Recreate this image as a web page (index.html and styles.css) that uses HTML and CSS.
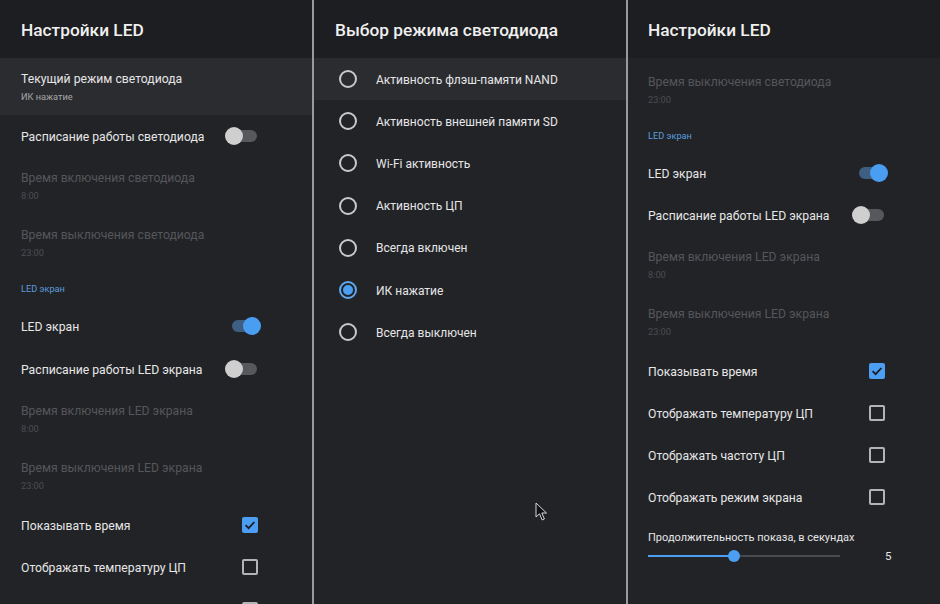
FILE: index.html
```html
<!DOCTYPE html>
<html lang="ru">
<head>
<meta charset="utf-8">
<title>Настройки LED</title>
<link rel="stylesheet" href="styles.css">
</head>
<body>
<div class="screen">
  <section class="panel">
    <header class="head">Настройки LED</header>
    <div class="list loose">
      <div class="row two hl"><div class="txt"><div class="t">Текущий режим светодиода</div><div class="s">ИК нажатие</div></div></div>
      <div class="row one"><div class="txt"><div class="t">Расписание работы светодиода</div></div><span class="sw off"><i class="track"></i><i class="thumb"></i></span></div>
      <div class="row two dis"><div class="txt"><div class="t">Время включения светодиода</div><div class="s">8:00</div></div></div>
      <div class="row two dis"><div class="txt"><div class="t">Время выключения светодиода</div><div class="s">23:00</div></div></div>
      <div class="row cat">LED экран</div>
      <div class="row one"><div class="txt"><div class="t">LED экран</div></div><span class="sw on"><i class="track"></i><i class="thumb"></i></span></div>
      <div class="row one"><div class="txt"><div class="t">Расписание работы LED экрана</div></div><span class="sw off"><i class="track"></i><i class="thumb"></i></span></div>
      <div class="row two dis"><div class="txt"><div class="t">Время включения LED экрана</div><div class="s">8:00</div></div></div>
      <div class="row two dis"><div class="txt"><div class="t">Время выключения LED экрана</div><div class="s">23:00</div></div></div>
      <div class="row one"><div class="txt"><div class="t">Показывать время</div></div><span class="cb checked"><svg viewBox="0 0 16 16" width="16" height="16"><path d="M3.6 8.2 L6.6 11.1 L12.4 5" fill="none" stroke="#1d1e22" stroke-width="1.8"/></svg></span></div>
      <div class="row one"><div class="txt"><div class="t">Отображать температуру ЦП</div></div><span class="cb"></span></div>
      <div class="row one"><div class="txt"></div><span class="cb"></span></div>
    </div>
  </section>

  <section class="panel mid">
    <header class="head">Выбор режима светодиода</header>
    <div class="list">
      <div class="opt hl"><span class="radio"></span><span class="ot">Активность флэш-памяти NAND</span></div>
      <div class="opt"><span class="radio"></span><span class="ot">Активность внешней памяти SD</span></div>
      <div class="opt"><span class="radio"></span><span class="ot">Wi-Fi активность</span></div>
      <div class="opt"><span class="radio"></span><span class="ot">Активность ЦП</span></div>
      <div class="opt"><span class="radio"></span><span class="ot">Всегда включен</span></div>
      <div class="opt"><span class="radio sel"></span><span class="ot">ИК нажатие</span></div>
      <div class="opt"><span class="radio"></span><span class="ot">Всегда выключен</span></div>
    </div>
  </section>

  <section class="panel right">
    <header class="head">Настройки LED</header>
    <div class="list shifted">
      <div class="row two dis"><div class="txt"><div class="t">Время выключения светодиода</div><div class="s">23:00</div></div></div>
      <div class="row cat">LED экран</div>
      <div class="row one"><div class="txt"><div class="t">LED экран</div></div><span class="sw on"><i class="track"></i><i class="thumb"></i></span></div>
      <div class="row one"><div class="txt"><div class="t">Расписание работы LED экрана</div></div><span class="sw off"><i class="track"></i><i class="thumb"></i></span></div>
      <div class="row two dis"><div class="txt"><div class="t">Время включения LED экрана</div><div class="s">8:00</div></div></div>
      <div class="row two dis"><div class="txt"><div class="t">Время выключения LED экрана</div><div class="s">23:00</div></div></div>
      <div class="row one"><div class="txt"><div class="t">Показывать время</div></div><span class="cb checked"><svg viewBox="0 0 16 16" width="16" height="16"><path d="M3.6 8.2 L6.6 11.1 L12.4 5" fill="none" stroke="#1d1e22" stroke-width="1.8"/></svg></span></div>
      <div class="row one"><div class="txt"><div class="t">Отображать температуру ЦП</div></div><span class="cb"></span></div>
      <div class="row one"><div class="txt"><div class="t">Отображать частоту ЦП</div></div><span class="cb"></span></div>
      <div class="row one"><div class="txt"><div class="t">Отображать режим экрана</div></div><span class="cb"></span></div>
      <div class="slider-row">
        <div class="sl-label">Продолжительность показа, в секундах</div>
        <div class="sl-line">
          <div class="sl-track"><div class="sl-fill" style="width:86px"></div><span class="sl-thumb" style="left:86px"></span></div>
          <span class="sl-val">5</span>
        </div>
      </div>
    </div>
  </section>

  <svg class="cursor" width="14" height="20" viewBox="0 0 14 20"><path d="M1 1 L1 15 L4.5 11.8 L7.2 18 L9.4 17 L6.8 11 L11.5 11 Z" fill="#111214" stroke="#d8d8d8" stroke-width="1"/></svg>
</div>
</body>
</html>
```

FILE: styles.css
```css
* { box-sizing: border-box; margin: 0; padding: 0; }
html, body { width: 940px; height: 604px; overflow: hidden; background: #222327; }
body { font-family: Roboto, "Noto Sans", "Liberation Sans", sans-serif; color: #e6e6e6; }
.screen { position: relative; display: flex; width: 940px; height: 604px; overflow: hidden; }
.panel { width: 312px; flex: none; height: 604px; background: #222327; overflow: hidden; }
.panel.mid, .panel.right { width: 314px; border-left: 2px solid #9a9a9c; }
.head { height: 58px; background: #1d1e21; font-size: 17.3px; font-weight: 500; line-height: 60px; padding-left: 21px; color: #f0f0f0; }
.panel.right .head { padding-left: 20px; }
.list { display: flex; flex-direction: column; }
.list.shifted { padding-top: 3px; }
.row { display: flex; align-items: center; padding-left: 21px; padding-right: 50px; flex: none; }
.panel.right .row { padding-left: 20px; padding-right: 51px; }
.row .txt { flex: 1; }
.row.one { height: 42px; }
.row.one .txt { padding-top: 2px; }
.loose .row.one { height: 42.3px; }
.row.two { height: 57px; align-items: flex-start; padding-top: 12px; }
.row.cat { height: 34px; font-size: 9.2px; color: #5b9ddd; padding-top: 1px; }
.row.hl, .opt.hl { background: #2b2c30; }
.t { font-size: 12.2px; line-height: 18px; color: #e6e6e6; }
.s { font-size: 9.2px; line-height: 14px; margin-top: 2px; color: #a8a8aa; }
.dis .t { color: #55565a; }
.dis .s { color: #4c4d51; }

.sw { position: relative; width: 37px; height: 18px; flex: none; }
.sw .track { position: absolute; left: 4px; top: 3px; width: 28px; height: 12px; border-radius: 6px; background: #57585b; }
.sw .thumb { position: absolute; top: 0; width: 18px; height: 18px; border-radius: 50%; background: #cfcfd0; }
.sw.off .thumb { left: 0; }
.sw.on .track { left: 7px; background: #3e5f82; }
.sw.on .thumb { left: 18px; background: #4a9ef2; }

.cb { width: 16px; height: 16px; flex: none; border: 2px solid #b4b4b6; border-radius: 2px; margin-right: 4px; display: block; }
.cb.checked { border: none; background: #4b9ef2; }
.cb svg { display: block; }

.opt { height: 42.2px; flex: none; display: flex; align-items: center; padding-left: 25px; }
.radio { width: 18px; height: 18px; border: 2px solid #c9c9cb; border-radius: 50%; flex: none; margin-right: 19px; position: relative; }
.radio.sel { border-color: #5ea8f0; }
.radio.sel::after { content: ""; position: absolute; left: 2px; top: 2px; width: 10px; height: 10px; border-radius: 50%; background: #4b9ef2; }
.ot { font-size: 12px; color: #e6e6e6; padding-top: 1px; }

.slider-row { padding-left: 20px; padding-top: 11px; }
.sl-label { font-size: 11px; line-height: 18px; color: #e6e6e6; }
.sl-line { display: flex; align-items: center; height: 18px; }
.sl-track { position: relative; width: 192px; height: 2px; background: #48494d; }
.sl-fill { height: 2px; background: #4b9ef2; }
.sl-thumb { position: absolute; top: -5px; margin-left: -6px; width: 12px; height: 12px; border-radius: 50%; background: #4b9ef2; }
.sl-val { margin-left: 45px; font-size: 11.5px; color: #e6e6e6; }

.cursor { position: absolute; left: 535px; top: 502px; }
```
